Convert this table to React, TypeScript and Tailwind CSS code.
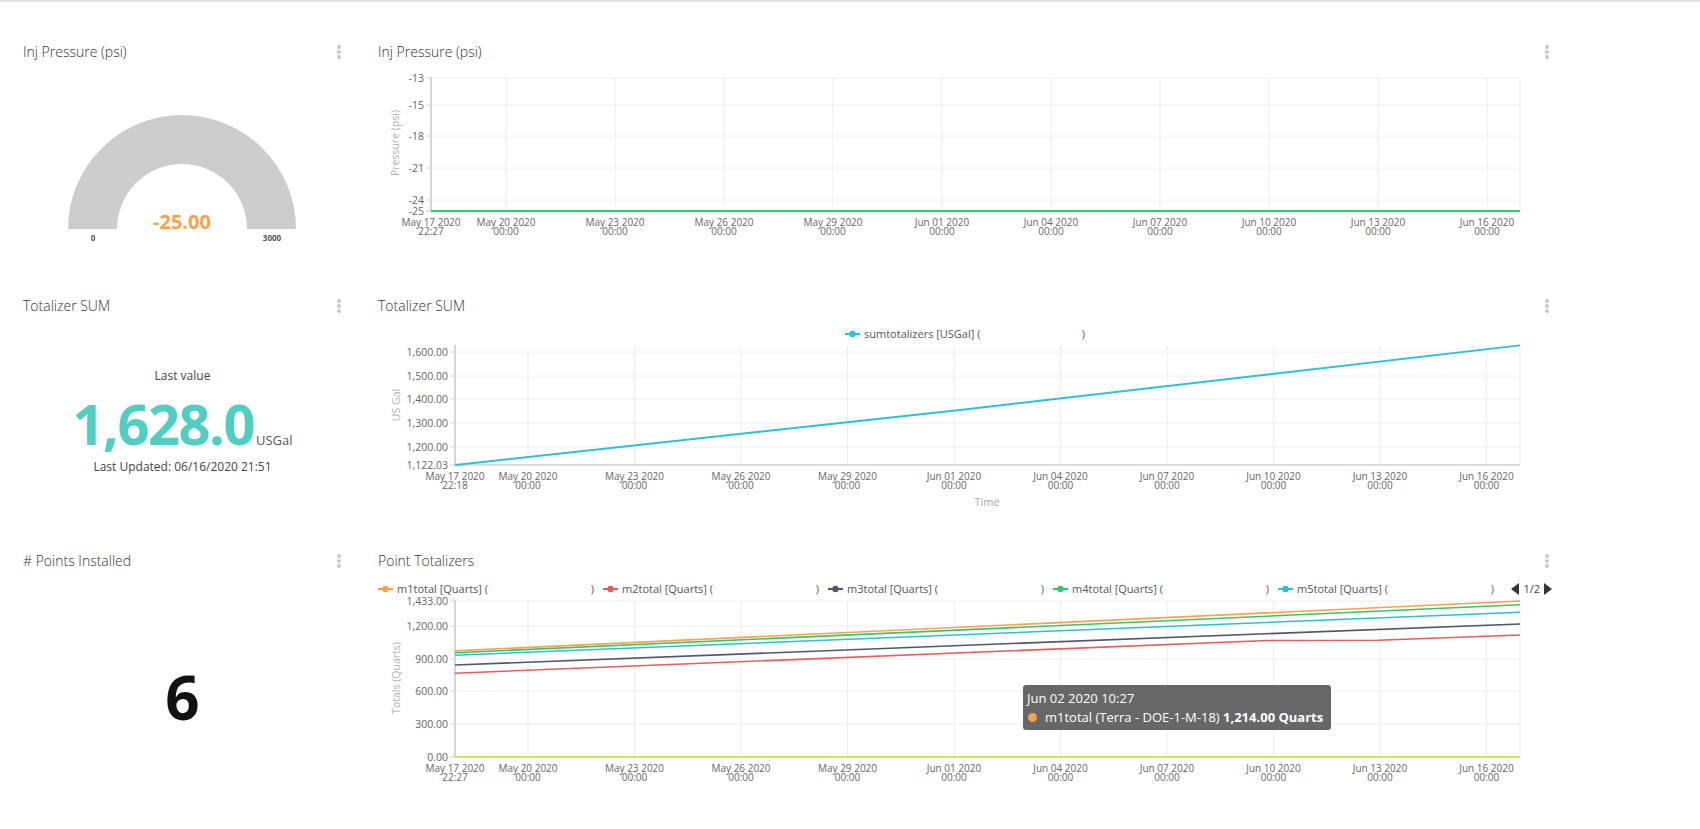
import React from "react";

const DATES = [
  "May 20 2020",
  "May 23 2020",
  "May 26 2020",
  "May 29 2020",
  "Jun 01 2020",
  "Jun 04 2020",
  "Jun 07 2020",
  "Jun 10 2020",
  "Jun 13 2020",
  "Jun 16 2020",
];

function Kebab() {
  return (
    <div className="flex flex-col gap-[1px]">
      <span className="block w-[4px] h-[4px] rounded-full bg-[#c9c9c9]" />
      <span className="block w-[4px] h-[4px] rounded-full bg-[#c9c9c9]" />
      <span className="block w-[4px] h-[4px] rounded-full bg-[#c9c9c9]" />
    </div>
  );
}

function Header({ title, right }: { title: string; right?: boolean }) {
  return (
    <div
      className={`flex items-center justify-between h-[20px] pl-[18px] ${
        right ? "pr-[21px]" : "pr-[19px]"
      }`}
    >
      <span className="text-[14px] font-light text-[#333] leading-[20px]">{title}</span>
      <Kebab />
    </div>
  );
}

type Tick = { label: string; y: number };

type ChartProps = {
  height: number;
  L: number;
  R: number;
  T: number;
  B: number;
  yTicks: Tick[];
  first: [string, string];
  x0: number;
  dx: number;
  labelY: number;
  yTitle: string;
  yTitleX: number;
  yTitleY: number;
  xTitle?: { text: string; x: number; y: number };
  children?: React.ReactNode;
};

function XLabel({ x, y, l1, l2 }: { x: number; y: number; l1: string; l2: string }) {
  return (
    <text x={x} y={y} textAnchor="middle" fontSize={10} fill="#666">
      <tspan x={x} dy="0.35em">
        {l1}
      </tspan>
      <tspan x={x} dy="9.5">
        {l2}
      </tspan>
    </text>
  );
}

function Chart(p: ChartProps) {
  const xs = DATES.map((d, i) => ({ x: p.x0 + p.dx * i, d }));
  return (
    <svg width={1210} height={p.height} className="block overflow-visible">
      {p.yTicks.map((t) => (
        <line key={"h" + t.label} x1={p.L} x2={p.R} y1={t.y} y2={t.y} stroke="#eeeeee" strokeWidth={1} />
      ))}
      {xs.map((t) => (
        <line key={"v" + t.d} x1={t.x} x2={t.x} y1={p.T} y2={p.B} stroke="#eeeeee" strokeWidth={1} />
      ))}
      <line x1={p.R} x2={p.R} y1={p.T} y2={p.B} stroke="#eeeeee" strokeWidth={1} />
      <line x1={p.L} x2={p.L} y1={p.T - 1} y2={p.B + 1} stroke="#d6d6d6" strokeWidth={2} />
      <line x1={p.L} x2={p.R} y1={p.B} y2={p.B} stroke="#d6d6d6" strokeWidth={1.5} />
      {p.yTicks.map((t) => (
        <g key={"yl" + t.label}>
          <line x1={p.L - 5} x2={p.L} y1={t.y} y2={t.y} stroke="#d6d6d6" strokeWidth={1} />
          <text x={p.L - 7} y={t.y} dy="0.35em" textAnchor="end" fontSize={10.5} fill="#666">
            {t.label}
          </text>
        </g>
      ))}
      <text
        x={p.yTitleX}
        y={p.yTitleY}
        dy="0.35em"
        textAnchor="middle"
        fontSize={10.5}
        fill="#b0b0b0"
        transform={`rotate(-90 ${p.yTitleX} ${p.yTitleY})`}
      >
        {p.yTitle}
      </text>
      <XLabel x={p.L} y={p.labelY} l1={p.first[0]} l2={p.first[1]} />
      {xs.map((t) => (
        <XLabel key={"xl" + t.d} x={t.x} y={p.labelY} l1={t.d} l2="00:00" />
      ))}
      {p.xTitle && (
        <text x={p.xTitle.x} y={p.xTitle.y} dy="0.35em" textAnchor="middle" fontSize={11} fill="#a8a8a8">
          {p.xTitle.text}
        </text>
      )}
      {p.children}
    </svg>
  );
}

function Marker({ color }: { color: string }) {
  return (
    <svg width="15" height="8" className="shrink-0 block">
      <line x1="0" y1="4" x2="15" y2="4" stroke={color} strokeWidth="2" />
      <circle cx="7.5" cy="4" r="3.2" fill={color} />
    </svg>
  );
}

function LegendItem({ color, text, width }: { color: string; text: string; width: string }) {
  return (
    <div className={`flex items-center ${width}`}>
      <Marker color={color} />
      <span className="ml-[4px] whitespace-nowrap">{text}</span>
      <span className="ml-auto">)</span>
    </div>
  );
}

function Gauge() {
  return (
    <svg width={355} height={190} className="block">
      <path d="M 63 167 A 114 114 0 0 1 291 167 L 242 167 A 65 65 0 0 0 112 167 Z" fill="#cdcdcd" />
      <text x={177} y={167} textAnchor="middle" fontSize={20} fontWeight={700} fill="#f7a24c">
        -25.00
      </text>
      <text x={88} y={179} textAnchor="middle" fontSize={8} fontWeight={700} fill="#555">
        0
      </text>
      <text x={267} y={179} textAnchor="middle" fontSize={8} fontWeight={700} fill="#555">
        3000
      </text>
    </svg>
  );
}

export default function App() {
  const y2 = (v: number) => 124 - ((v - 1122.03) * 113) / 477.97;
  const y3 = (v: number) => 161 - (v * 156) / 1433;

  return (
    <div className="min-h-screen bg-white font-['Open_Sans',sans-serif] text-[#444]">
      <div className="h-[2px] bg-[#e3e3e3]" />
      <div className="pt-[40px] pl-[5px]">
        {/* Row 1 */}
        <div className="flex h-[254px]">
          <div className="w-[355px] shrink-0">
            <Header title="Inj Pressure (psi)" />
            <Gauge />
          </div>
          <div className="w-[1210px] shrink-0">
            <Header title="Inj Pressure (psi)" right />
            <Chart
              height={190}
              L={71}
              R={1160}
              T={16}
              B={149}
              yTicks={[
                { label: "-13", y: 16 },
                { label: "-15", y: 43 },
                { label: "-18", y: 74 },
                { label: "-21", y: 106 },
                { label: "-24", y: 138 },
                { label: "-25", y: 149 },
              ]}
              first={["May 17 2020", "22:27"]}
              x0={146}
              dx={109}
              labelY={160}
              yTitle="Pressure (psi)"
              yTitleX={35}
              yTitleY={81}
            >
              <line x1={71} x2={1160} y1={149} y2={149} stroke="#2ecc71" strokeWidth={2} />
            </Chart>
          </div>
        </div>

        {/* Row 2 */}
        <div className="flex h-[255px]">
          <div className="w-[355px] shrink-0 flex flex-col">
            <Header title="Totalizer SUM" />
            <div className="flex flex-col items-center">
              <div className="mt-[52px] text-[12px] leading-[16px] text-[#444]">Last value</div>
              <div className="mt-[9px] flex items-baseline h-[60px]">
                <span className="text-[56px] leading-[60px] font-bold text-[#4fcfbf] tracking-[-1.5px]">
                  1,628.0
                </span>
                <span className="ml-[2px] text-[13px] text-[#555]">USGal</span>
              </div>
              <div className="mt-[6px] text-[12px] leading-[16px] text-[#444]">
                Last Updated: 06/16/2020 21:51
              </div>
            </div>
          </div>
          <div className="w-[1210px] shrink-0">
            <Header title="Totalizer SUM" right />
            <div className="mt-[11px] h-[14px] flex justify-center text-[11px] text-[#555] leading-[14px]">
              <LegendItem color="#29c3d8" text="sumtotalizers [USGal] (" width="w-[240px]" />
            </div>
            <Chart
              height={170}
              L={95}
              R={1160}
              T={5}
              B={124}
              yTicks={[
                { label: "1,600.00", y: 11 },
                { label: "1,500.00", y: 35 },
                { label: "1,400.00", y: 58 },
                { label: "1,300.00", y: 82 },
                { label: "1,200.00", y: 106 },
                { label: "1,122.03", y: 124 },
              ]}
              first={["May 17 2020", "22:18"]}
              x0={168}
              dx={106.5}
              labelY={135}
              yTitle="US Gal"
              yTitleX={36}
              yTitleY={64}
              xTitle={{ text: "Time", x: 627, y: 161 }}
            >
              <polyline
                points={`95,${y2(1122.03)} 600,${y2(1355)} 1160,${y2(1628)}`}
                fill="none"
                stroke="#29c3d8"
                strokeWidth={2}
              />
            </Chart>
          </div>
        </div>

        {/* Row 3 */}
        <div className="flex h-[235px]">
          <div className="w-[355px] shrink-0 flex flex-col">
            <Header title="# Points Installed" />
            <div className="mt-[96px] flex justify-center">
              <span className="text-[60px] leading-[60px] font-bold text-[#111]">6</span>
            </div>
          </div>
          <div className="w-[1210px] shrink-0">
            <Header title="Point Totalizers" right />
            <div className="mt-[11px] h-[14px] flex items-center px-[18px] gap-[9px] text-[11px] text-[#555] leading-[14px]">
              <LegendItem color="#f7a24c" text="m1total [Quarts] (" width="w-[216px]" />
              <LegendItem color="#e85c5c" text="m2total [Quarts] (" width="w-[216px]" />
              <LegendItem color="#4f5869" text="m3total [Quarts] (" width="w-[216px]" />
              <LegendItem color="#35c66b" text="m4total [Quarts] (" width="w-[216px]" />
              <LegendItem color="#2cbfd6" text="m5total [Quarts] (" width="w-[216px]" />
              <div className="ml-auto flex items-center gap-[4px]">
                <svg width="8" height="12" className="block">
                  <polygon points="8,0 8,12 0,6" fill="#333" />
                </svg>
                <span className="text-[11px] text-[#444]">1/2</span>
                <svg width="8" height="12" className="block">
                  <polygon points="0,0 0,12 8,6" fill="#333" />
                </svg>
              </div>
            </div>
            <div className="relative">
              <Chart
                height={190}
                L={95}
                R={1160}
                T={5}
                B={161}
                yTicks={[
                  { label: "1,433.00", y: 5 },
                  { label: "1,200.00", y: 30 },
                  { label: "900.00", y: 63 },
                  { label: "600.00", y: 95 },
                  { label: "300.00", y: 128 },
                  { label: "0.00", y: 161 },
                ]}
                first={["May 17 2020", "22:27"]}
                x0={168}
                dx={106.5}
                labelY={172}
                yTitle="Totals (Quarts)"
                yTitleX={36}
                yTitleY={82}
              >
                <line x1={95} x2={1160} y1={161} y2={161} stroke="#c5ec55" strokeWidth={2} />
                <polyline
                  points={`95,${y3(770)} 908,${y3(1070)} 1018,${y3(1072)} 1160,${y3(1120)}`}
                  fill="none"
                  stroke="#e85c5c"
                  strokeWidth={1.6}
                />
                <polyline
                  points={`95,${y3(845)} 1160,${y3(1222)}`}
                  fill="none"
                  stroke="#4f5869"
                  strokeWidth={1.6}
                />
                <polyline
                  points={`95,${y3(935)} 1160,${y3(1330)}`}
                  fill="none"
                  stroke="#2cbfd6"
                  strokeWidth={1.6}
                />
                <polyline
                  points={`95,${y3(958)} 1160,${y3(1398)}`}
                  fill="none"
                  stroke="#35c66b"
                  strokeWidth={1.6}
                />
                <polyline
                  points={`95,${y3(975)} 1160,${y3(1433)}`}
                  fill="none"
                  stroke="#f7a24c"
                  strokeWidth={1.6}
                />
              </Chart>
              <div className="absolute left-[663px] top-[89px] w-[308px] h-[45px] rounded-[3px] bg-[#676767] px-[4px] pt-[4px] text-white">
                <div className="text-[13px] leading-[18px]">Jun 02 2020 10:27</div>
                <div className="flex items-center text-[13px] leading-[20px] whitespace-nowrap">
                  <span className="block w-[9px] h-[9px] rounded-full bg-[#f7a24c] ml-[1px] mr-[8px]" />
                  <span>m1total (Terra - DOE-1-M-18)&nbsp;</span>
                  <span className="font-bold">1,214.00 Quarts</span>
                </div>
              </div>
            </div>
          </div>
        </div>
      </div>
    </div>
  );
}
